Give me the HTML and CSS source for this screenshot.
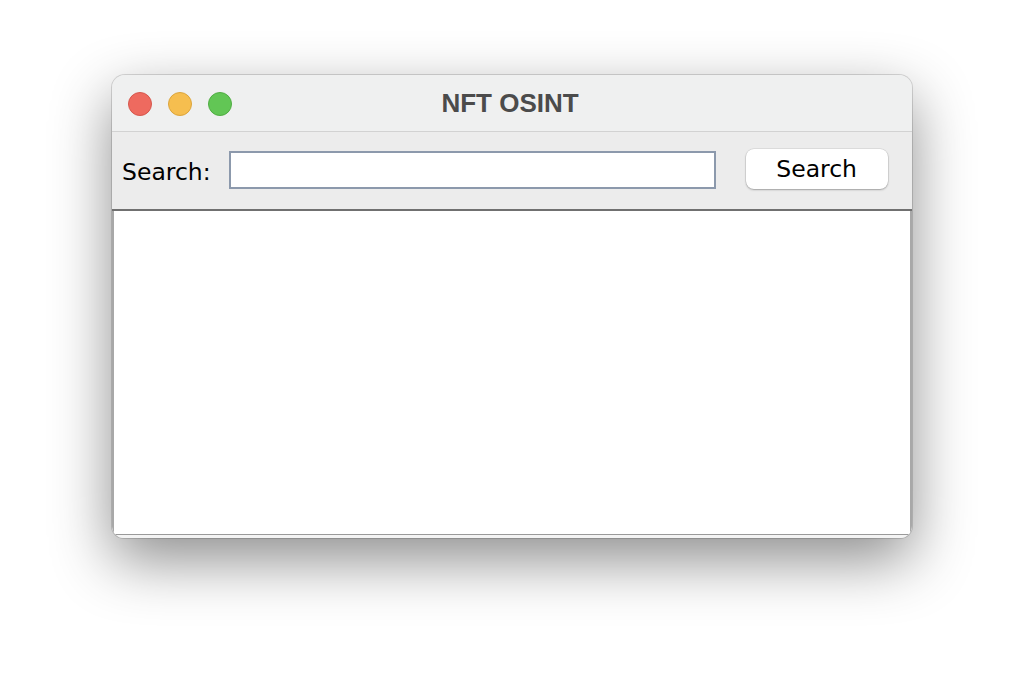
FILE: index.html
```html
<!DOCTYPE html>
<html>
<head>
<meta charset="utf-8">
<link rel="stylesheet" href="styles.css">
</head>
<body>
<div class="window">
  <div class="titlebar">
    <div class="lights">
      <span class="light red"></span>
      <span class="light yellow"></span>
      <span class="light green"></span>
    </div>
    <div class="title">NFT OSINT</div>
  </div>
  <div class="toolbar">
    <label class="label">Search:</label>
    <input class="field" type="text">
    <button class="btn">Search</button>
  </div>
  <div class="content"></div>
  <div class="foot"></div>
</div>
</body>
</html>
```
FILE: styles.css
```css
html, body {
  margin: 0;
  padding: 0;
  background: #ffffff;
}
body {
  padding: 75px 0 0 112px;
  height: 686px;
  box-sizing: border-box;
  overflow: hidden;
}
.window {
  width: 800px;
  height: 463px;
  border-radius: 13px 13px 12px 12px;
  background: #ececec;
  box-shadow: 0 22px 60px rgba(0, 0, 0, 0.45), 0 0 0 1px rgba(0, 0, 0, 0.14);
  overflow: hidden;
  display: flex;
  flex-direction: column;
}
.titlebar {
  height: 56px;
  flex: none;
  background: #eff0f0;
  border-bottom: 1px solid #d2d2d2;
  display: flex;
  align-items: center;
  position: relative;
}
.lights {
  display: flex;
  gap: 16px;
  padding-left: 16px;
  padding-top: 1px;
}
.light {
  width: 24px;
  height: 24px;
  border-radius: 50%;
  box-sizing: border-box;
}
.red { background: #ee6a5f; border: 1px solid #d6574d; }
.yellow { background: #f6be4f; border: 1px solid #dca53c; }
.green { background: #62c655; border: 1px solid #50ad43; }
.title {
  position: absolute;
  left: 0;
  right: 0;
  top: 0;
  bottom: 0;
  display: flex;
  align-items: center;
  justify-content: center;
  font-family: "Liberation Sans", Arial, sans-serif;
  font-weight: bold;
  font-size: 26px;
  color: #4b4b4b;
  padding-right: 4px;
  pointer-events: none;
}
.toolbar {
  height: 77px;
  flex: none;
  display: flex;
  align-items: center;
  padding-left: 10px;
  border-bottom: 2px solid #707070;
  font-family: "DejaVu Sans", Verdana, sans-serif;
}
.label {
  font-size: 23.5px;
  color: #000000;
  margin-right: 18px;
  padding-top: 2px;
}
.field {
  width: 487px;
  height: 38px;
  box-sizing: border-box;
  border: 2px solid #8c99ac;
  background: #ffffff;
  margin: -1px 30px 0 0;
  padding: 0;
  outline: none;
}
.btn {
  width: 142px;
  height: 40px;
  border: none;
  border-radius: 8px;
  background: #ffffff;
  box-shadow: 0 1px 2px rgba(0, 0, 0, 0.28), 0 0 0 0.5px rgba(0, 0, 0, 0.12);
  font-family: "DejaVu Sans", Verdana, sans-serif;
  font-size: 23.5px;
  color: #000000;
  padding: 0;
  margin-top: -3px;
}
.content {
  flex: 1;
  background: #ffffff;
  border-left: 2px solid #a8a8a8;
  border-right: 2px solid #a8a8a8;
  border-bottom: 1px solid #9a9a9a;
}
.foot {
  height: 3px;
  flex: none;
  background: #f4f4f4;
}
```
